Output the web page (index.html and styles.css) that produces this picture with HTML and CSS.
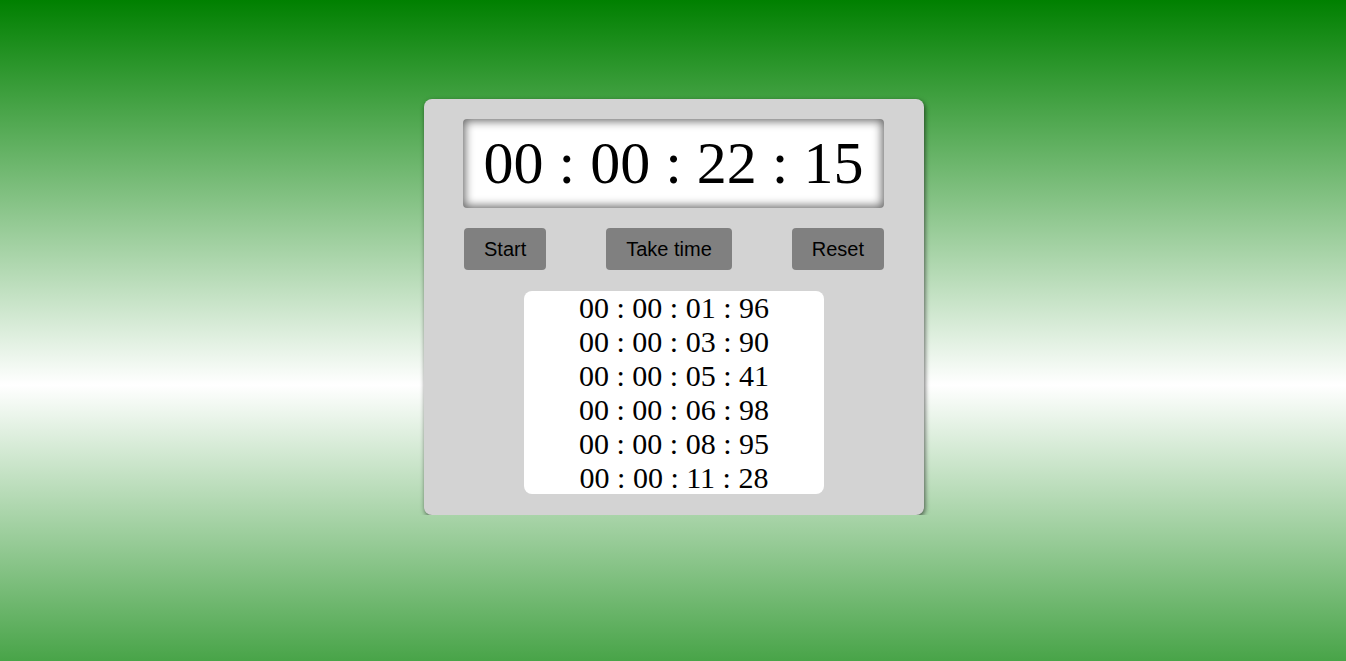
FILE: index.html
```html
<!DOCTYPE html>
<html>
<head>
<meta charset="utf-8">
<link rel="stylesheet" href="styles.css">
</head>
<body>
<div class="card">
  <div class="display">00 : 00 : 22 : 15</div>
  <div class="buttons">
    <button class="btn">Start</button>
    <button class="btn">Take time</button>
    <button class="btn">Reset</button>
  </div>
  <div class="laps">
    <div class="lap">00 : 00 : 01 : 96</div>
    <div class="lap">00 : 00 : 03 : 90</div>
    <div class="lap">00 : 00 : 05 : 41</div>
    <div class="lap">00 : 00 : 06 : 98</div>
    <div class="lap">00 : 00 : 08 : 95</div>
    <div class="lap">00 : 00 : 11 : 28</div>
  </div>
</div>
</body>
</html>
```
FILE: styles.css
```css
html {
  height: 100%;
  background: linear-gradient(to bottom, #008000 0px, #ffffff 385px, #008000 770px);
  background-repeat: no-repeat;
  background-size: 100% 770px;
}
body {
  margin: 0;
  padding: 99px 0 0 2px;
  font-family: "Liberation Serif", "Times New Roman", serif;
}
.card {
  width: 500px;
  box-sizing: border-box;
  margin: 0 auto;
  background: #d3d3d3;
  border-radius: 8px;
  box-shadow: 1px 2px 5px rgba(0, 0, 0, 0.6);
  padding: 20px 40px 21px 39px;
  display: flex;
  flex-direction: column;
  align-items: center;
}
.display {
  width: 421px;
  height: 89px;
  box-sizing: border-box;
  background: #fff;
  border-radius: 4px;
  box-shadow: inset 0 0 10px 2px rgba(0, 0, 0, 0.6);
  font-size: 60px;
  line-height: 89px;
  text-align: center;
  color: #000;
}
.buttons {
  width: 421px;
  display: flex;
  justify-content: space-between;
  margin-top: 20px;
  padding-left: 1px;
  box-sizing: border-box;
}
.btn {
  height: 42px;
  padding: 0 20px;
  border: none;
  border-radius: 4px;
  background: #808080;
  color: #000;
  font-family: "Liberation Sans", Arial, sans-serif;
  font-size: 20px;
}
.laps {
  margin-top: 21px;
  width: 300px;
  height: 203px;
  background: #fff;
  border-radius: 8px;
  overflow: hidden;
  text-align: center;
  font-size: 30px;
  line-height: 34px;
  margin-left: 1px;
}
.lap {
  height: 34px;
}
```
